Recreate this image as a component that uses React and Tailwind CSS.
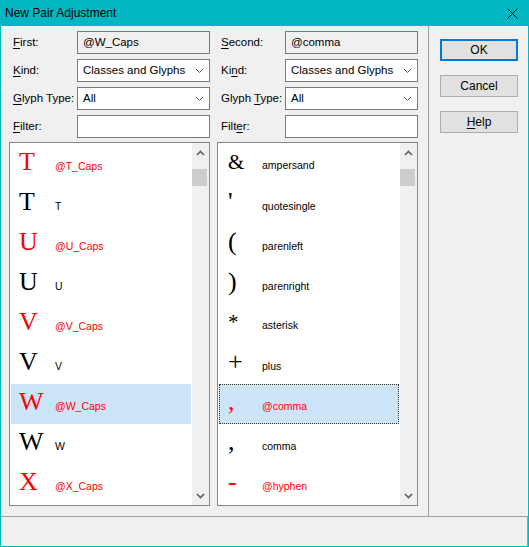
import React from 'react';

const leftItems = [
  { g: 'T', name: '@T_Caps', red: true },
  { g: 'T', name: 'T' },
  { g: 'U', name: '@U_Caps', red: true },
  { g: 'U', name: 'U' },
  { g: 'V', name: '@V_Caps', red: true },
  { g: 'V', name: 'V' },
  { g: 'W', name: '@W_Caps', red: true, selected: true },
  { g: 'W', name: 'W' },
  { g: 'X', name: '@X_Caps', red: true },
];

const rightItems = [
  { g: '&', name: 'ampersand', size: 'text-[21px]' },
  { g: "'", name: 'quotesingle' },
  { g: '(', name: 'parenleft' },
  { g: ')', name: 'parenright' },
  { g: '*', name: 'asterisk', size: 'text-[21px]' },
  { g: '+', name: 'plus' },
  { g: ',', name: '@comma', red: true, selected: true, focus: true },
  { g: ',', name: 'comma' },
  { g: '-', name: '@hyphen', red: true },
];

const Chevron = () => (
  <svg width="9" height="6" viewBox="0 0 9 6" className="shrink-0">
    <path d="M1 1 L4.5 4.5 L8 1" fill="none" stroke="#555" strokeWidth="1" />
  </svg>
);

const Label = ({ pre, u, post }) => (
  <span className="w-[68px] shrink-0 pl-[4px] text-[11.5px] text-black whitespace-nowrap">
    {pre}<span className="underline underline-offset-2">{u}</span>{post}
  </span>
);

const FieldRow = ({ label, children, className = '' }) => (
  <div className={`flex items-center h-[23px] ${className}`}>
    {label}
    {children}
  </div>
);

const TextBox = ({ value, readOnly }) => (
  <div className={`w-[133px] h-[23px] border border-[#7a7a7a] flex items-center px-[5px] text-[11.5px] text-black ${readOnly ? 'bg-[#f0f0f0]' : 'bg-white'}`}>
    {value}
  </div>
);

const Select = ({ value }) => (
  <div className="w-[133px] h-[23px] border border-[#7a7a7a] bg-white flex items-center justify-between pl-[5px] pr-[5px] text-[11.5px] text-black">
    <span>{value}</span>
    <Chevron />
  </div>
);

const ScrollBar = () => (
  <div className="w-[17px] shrink-0 bg-[#f0f0f0] flex flex-col items-center">
    <div className="h-[17px] w-full flex items-center justify-center mt-[1px]">
      <svg width="9" height="6" viewBox="0 0 9 6">
        <path d="M1 5 L4.5 1.5 L8 5" fill="none" stroke="#606060" strokeWidth="1.6" />
      </svg>
    </div>
    <div className="w-[15px] h-[17px] mt-[8px] bg-[#cdcdcd] self-start" />
    <div className="flex-1" />
    <div className="h-[17px] w-full flex items-center justify-center mb-[1px]">
      <svg width="9" height="6" viewBox="0 0 9 6">
        <path d="M1 1 L4.5 4.5 L8 1" fill="none" stroke="#606060" strokeWidth="1.6" />
      </svg>
    </div>
  </div>
);

const GlyphList = ({ items, padLeft, glyphWidth }) => (
  <div className="mt-[4px] h-[364px] border border-[#828790] bg-white flex">
    <div className="flex-1 p-[1px] overflow-hidden">
      {items.map((it, i) => (
        <div
          key={i}
          className={`h-[40px] flex items-baseline pt-[5px] ${padLeft} ${it.selected ? 'bg-[#cce4f7]' : ''} ${it.focus ? 'outline outline-dotted outline-[#333] -outline-offset-1' : ''}`}
        >
          <span className={`${glyphWidth} shrink-0 leading-[26px] font-['Liberation_Serif',serif] ${it.size || 'text-[26px]'} ${it.red ? 'text-[#ff0000]' : 'text-black'}`}>
            {it.g}
          </span>
          <span className={`text-[10.5px] ${it.red ? 'text-[#ff0000]' : 'text-black'}`}>{it.name}</span>
        </div>
      ))}
    </div>
    <ScrollBar />
  </div>
);

const Button = ({ children, primary }) => (
  <div
    className={`w-[78px] h-[22px] bg-[#e1e1e1] flex items-center justify-center text-[12px] text-black ${primary ? 'border-2 border-[#0078d7]' : 'border border-[#adadad]'}`}
  >
    {children}
  </div>
);

export default function App() {
  return (
    <div className="w-[529px] h-[547px] bg-[#00b7c3] flex flex-col font-['Liberation_Sans',Arial,sans-serif]">
      <div className="h-[26px] shrink-0 flex items-center justify-between pl-[5px] pr-[11px]">
        <span className="text-[12px] text-black">New Pair Adjustment</span>
        <svg width="11" height="11" viewBox="0 0 11 11">
          <path d="M0.5 0.5 L10.5 10.5 M10.5 0.5 L0.5 10.5" stroke="#000" strokeWidth="1" />
        </svg>
      </div>
      <div className="flex-1 mx-[1px] mb-[1px] bg-[#f0f0f0] flex flex-col">
        <div className="flex-1 flex">
          <div className="w-[428px] shrink-0 border-r border-[#a0a0a0] pl-[8px] pt-[5px]">
            <div className="grid grid-cols-[201px_201px] gap-x-[7px]">
              <div className="flex flex-col">
                <FieldRow label={<Label u="F" post="irst:" />}>
                  <TextBox value="@W_Caps" readOnly />
                </FieldRow>
                <FieldRow className="mt-[5px]" label={<Label u="K" post="ind:" />}>
                  <Select value="Classes and Glyphs" />
                </FieldRow>
                <FieldRow className="mt-[5px]" label={<Label u="G" post="lyph Type:" />}>
                  <Select value="All" />
                </FieldRow>
                <FieldRow className="mt-[5px]" label={<Label u="F" post="ilter:" />}>
                  <TextBox value="" />
                </FieldRow>
                <GlyphList items={leftItems} padLeft="pl-[8px]" glyphWidth="w-[36px]" />
              </div>
              <div className="flex flex-col">
                <FieldRow label={<Label u="S" post="econd:" />}>
                  <TextBox value="@comma" readOnly />
                </FieldRow>
                <FieldRow className="mt-[5px]" label={<Label pre="Ki" u="n" post="d:" />}>
                  <Select value="Classes and Glyphs" />
                </FieldRow>
                <FieldRow className="mt-[5px]" label={<Label pre="Glyph " u="T" post="ype:" />}>
                  <Select value="All" />
                </FieldRow>
                <FieldRow className="mt-[5px]" label={<Label pre="Filt" u="e" post="r:" />}>
                  <TextBox value="" />
                </FieldRow>
                <GlyphList items={rightItems} padLeft="pl-[9px]" glyphWidth="w-[34px]" />
              </div>
            </div>
          </div>
          <div className="flex-1 pl-[11px] pt-[13px] flex flex-col gap-[14px]">
            <Button primary>OK</Button>
            <Button>Cancel</Button>
            <Button>
              <span className="underline underline-offset-2">H</span>elp
            </Button>
          </div>
        </div>
        <div className="h-[30px] shrink-0 border-t border-[#a0a0a0] border-r border-r-[#a0a0a0]" />
      </div>
    </div>
  );
}
